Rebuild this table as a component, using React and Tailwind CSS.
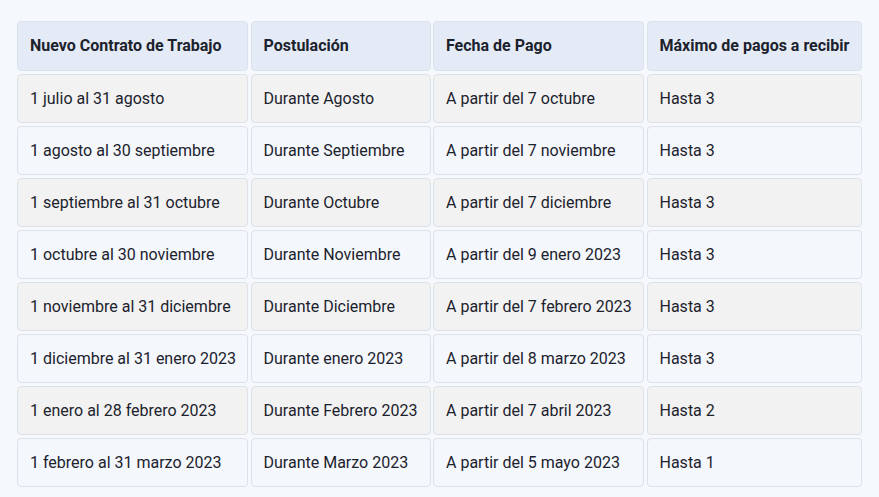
import React from 'react';

const headers = ['Nuevo Contrato de Trabajo', 'Postulación', 'Fecha de Pago', 'Máximo de pagos a recibir'];

const rows = [
    ['1 julio al 31 agosto', 'Durante Agosto', 'A partir del 7 octubre', 'Hasta 3'],
    ['1 agosto al 30 septiembre', 'Durante Septiembre', 'A partir del 7 noviembre', 'Hasta 3'],
    ['1 septiembre al 31 octubre', 'Durante Octubre', 'A partir del 7 diciembre', 'Hasta 3'],
    ['1 octubre al 30 noviembre', 'Durante Noviembre', 'A partir del 9 enero 2023', 'Hasta 3'],
    ['1 noviembre al 31 diciembre', 'Durante Diciembre', 'A partir del 7 febrero 2023', 'Hasta 3'],
    ['1 diciembre al 31 enero 2023', 'Durante enero 2023', 'A partir del 8 marzo 2023', 'Hasta 3'],
    ['1 enero al 28 febrero 2023', 'Durante Febrero 2023', 'A partir del 7 abril 2023', 'Hasta 2'],
    ['1 febrero al 31 marzo 2023', 'Durante Marzo 2023', 'A partir del 5 mayo 2023', 'Hasta 1'],
];

const App = () => {
    return (
        <div className="min-h-[497px] bg-[#f5f8fc] pt-[21px] pl-[17px]" style={{ fontFamily: 'Roboto, "Liberation Sans", sans-serif' }}>
            <div className="grid grid-cols-[231px_180px_211px_215px] gap-x-[2.5px] gap-y-[3px] w-max">
                {/* Header */}
                {headers.map((h) => (
                    <div
                        key={h}
                        className="h-[50px] flex items-center px-[12px] bg-[#e4ebf6] border border-[#dce3ec] rounded-[4px] text-[16px] font-bold text-[#1c222d] whitespace-nowrap"
                    >
                        {h}
                    </div>
                ))}

                {/* Rows */}
                {rows.map((row, i) =>
                    row.map((cell, j) => (
                        <div
                            key={`${i}-${j}`}
                            className={`h-[49px] flex items-center px-[12px] border border-[#dde2e9] rounded-[4px] text-[16px] text-[#1c222d] whitespace-nowrap ${
                                i % 2 === 0 ? 'bg-[#f2f2f2]' : 'bg-[#f4f7fc]'
                            }`}
                        >
                            {cell}
                        </div>
                    ))
                )}
            </div>
        </div>
    );
};

export default App;
